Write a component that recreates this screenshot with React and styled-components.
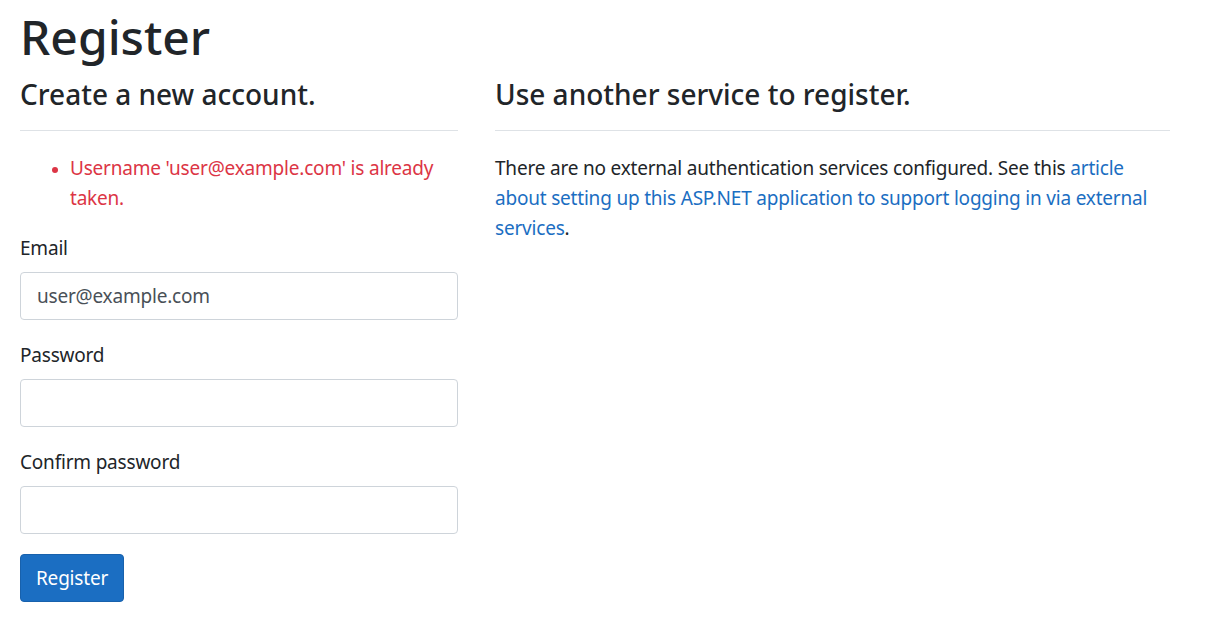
import React from 'react';
import styled, { createGlobalStyle } from 'styled-components';

const GlobalStyle = createGlobalStyle`
  body {
    margin: 0;
    background: #fff;
    color: #212529;
    font-family: "Noto Sans", "Open Sans", sans-serif;
    font-size: 19px;
    letter-spacing: -0.2px;
    line-height: 30px;
  }
`;

const Page = styled.main`
  padding: 7px 20px 0;
`;

const Title = styled.h1`
  font-size: 48px;
  font-weight: 500;
  letter-spacing: 0;
  line-height: 60px;
  margin: 0 0 9px;
`;

const Row = styled.div`
  display: flex;
  gap: 37px;
`;

const Column = styled.section`
  width: ${p => p.width}px;
  flex: none;
`;

const Heading = styled.h2`
  font-size: 28px;
  font-weight: 500;
  letter-spacing: 0;
  line-height: 36px;
  margin: 0;
`;

const Rule = styled.hr`
  border: 0;
  border-top: 1px solid #dee2e6;
  margin: 18px 0 22px;
`;

const ErrorList = styled.ul`
  color: #dc3545;
  margin: 0 0 20px;
  padding-left: 50px;
  li::marker { font-size: 16px; }
`;

const Field = styled.div`
  margin-bottom: 20px;
`;

const Label = styled.label`
  display: block;
  margin-bottom: 9px;
`;

const Input = styled.input`
  display: block;
  box-sizing: border-box;
  width: 100%;
  height: 48px;
  padding: 0 16px;
  border: 1px solid #ced4da;
  border-radius: 4px;
  font: inherit;
  letter-spacing: inherit;
  color: #495057;
  background: #fff;
`;

const Button = styled.button`
  height: 48px;
  padding: 0 15px;
  border: 1px solid #1861ac;
  border-radius: 4px;
  background: #1b6ec2;
  color: #fff;
  font: inherit;
  letter-spacing: inherit;
`;

const Text = styled.p`
  margin: 0;
`;

const Link = styled.a`
  color: #1b6ec2;
  text-decoration: none;
`;

export default function App() {
  return (
    <>
      <GlobalStyle />
      <Page>
        <Title>Register</Title>
        <Row>
          <Column width={438}>
            <Heading>Create a new account.</Heading>
            <Rule />
            <ErrorList>
              <li>Username 'user@example.com' is already taken.</li>
            </ErrorList>
            <Field>
              <Label>Email</Label>
              <Input defaultValue="user@example.com" />
            </Field>
            <Field>
              <Label>Password</Label>
              <Input type="password" />
            </Field>
            <Field>
              <Label>Confirm password</Label>
              <Input type="password" />
            </Field>
            <Button>Register</Button>
          </Column>
          <Column width={675}>
            <Heading>Use another service to register.</Heading>
            <Rule />
            <Text>
              There are no external authentication services configured. See this{' '}
              <Link href="#">article about setting up this ASP.NET application to support logging in via external services</Link>.
            </Text>
          </Column>
        </Row>
      </Page>
    </>
  );
}
